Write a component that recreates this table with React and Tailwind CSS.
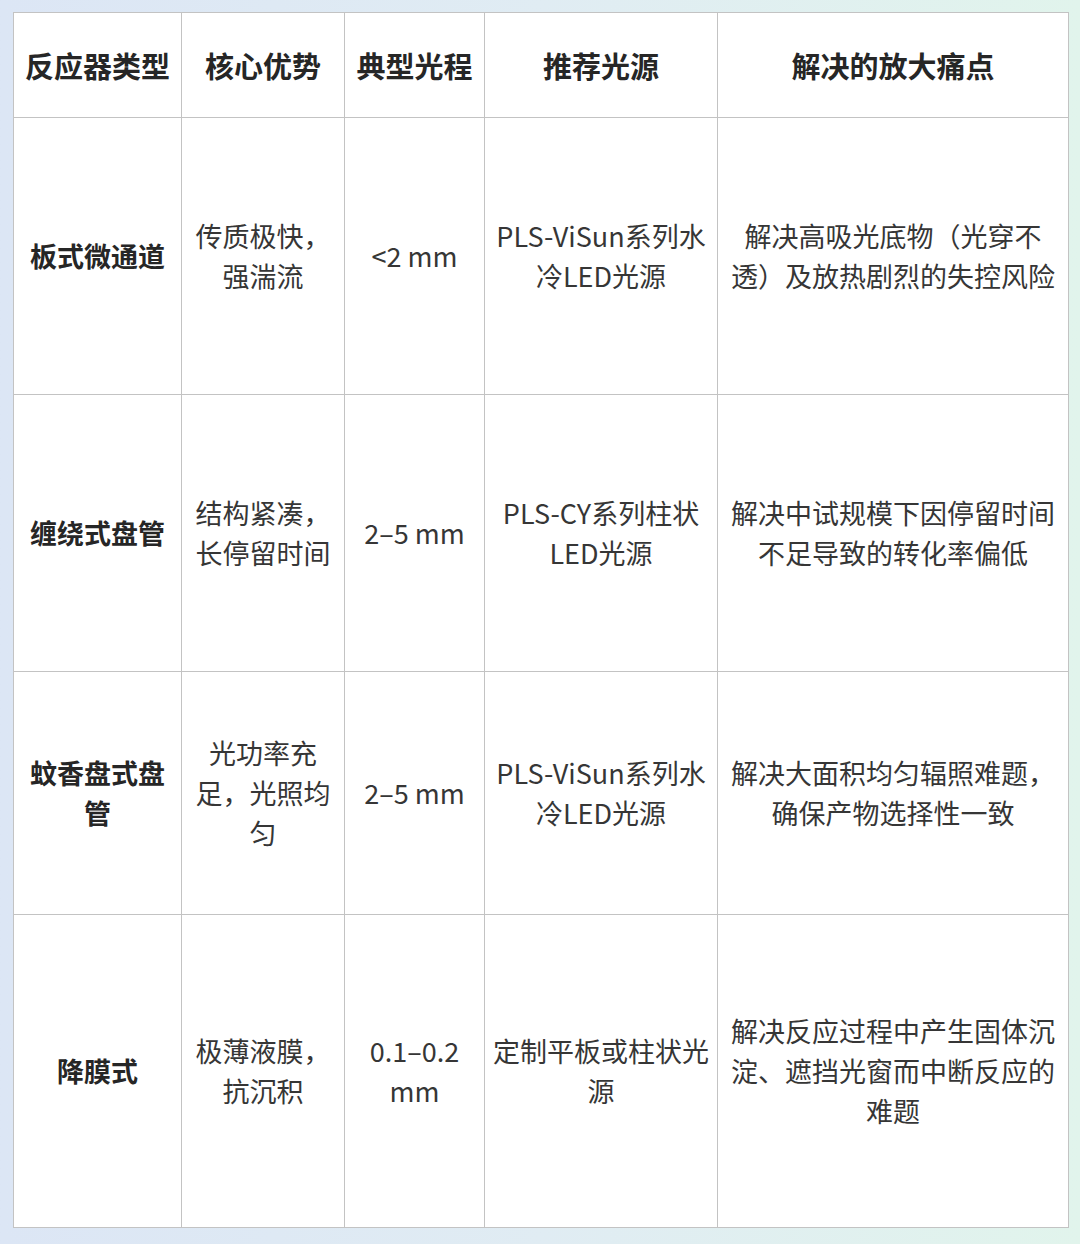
import React from 'react';

const cols = ['w-[168px]', 'w-[163px]', 'w-[140px]', 'w-[233px]', 'w-[351px]'];

const head = ['反应器类型', '核心优势', '典型光程', '推荐光源', '解决的放大痛点'];

const rows = [
  {
    h: 'h-[277px]',
    cells: ['板式微通道', '传质极快，强湍流', '<2 mm', 'PLS-ViSun系列水冷LED光源', '解决高吸光底物（光穿不透）及放热剧烈的失控风险'],
  },
  {
    h: 'h-[277px]',
    cells: ['缠绕式盘管', '结构紧凑，长停留时间', '2–5 mm', 'PLS-CY系列柱状LED光源', '解决中试规模下因停留时间不足导致的转化率偏低'],
  },
  {
    h: 'h-[243px]',
    cells: ['蚊香盘式盘管', '光功率充足，光照均匀', '2–5 mm', 'PLS-ViSun系列水冷LED光源', '解决大面积均匀辐照难题，确保产物选择性一致'],
  },
  {
    h: 'h-[313px]',
    cells: ['降膜式', '极薄液膜，抗沉积', '0.1–0.2 mm', '定制平板或柱状光源', '解决反应过程中产生固体沉淀、遮挡光窗而中断反应的难题'],
  },
];

const pad = ['px-[12px]', 'px-[12px]', 'px-[8px]', 'px-[6px]', 'px-[12px]'];

export default function App() {
  return (
    <div className="w-[1080px] h-[1244px] bg-gradient-to-r from-[#dce6f5] via-[#e0ecf3] to-[#e1f4ec] pt-[12px] pl-[13px] font-['Noto_Sans_CJK_SC','Noto_Sans',sans-serif]">
      {/* 反应器对比表 */}
      <table className="table-fixed border-collapse bg-white w-[1055px]">
        <colgroup>
          {cols.map((w, i) => (
            <col key={i} className={w} />
          ))}
        </colgroup>
        <thead>
          <tr className="h-[105px]">
            {head.map((t, i) => (
              <th
                key={i}
                className="border border-[#c3c3c3] text-center align-middle text-[29px] font-bold text-[#262626] leading-[40px] px-[6px]"
              >
                {t}
              </th>
            ))}
          </tr>
        </thead>
        <tbody>
          {rows.map((r, ri) => (
            <tr key={ri} className={r.h}>
              {r.cells.map((c, ci) => (
                <td
                  key={ci}
                  className={`border border-[#c3c3c3] text-center align-middle text-[27px] leading-[40px] ${pad[ci]} ${
                    ci === 0 ? 'font-bold text-[#262626]' : 'text-[#363636]'
                  }`}
                >
                  {c}
                </td>
              ))}
            </tr>
          ))}
        </tbody>
      </table>
    </div>
  );
}
